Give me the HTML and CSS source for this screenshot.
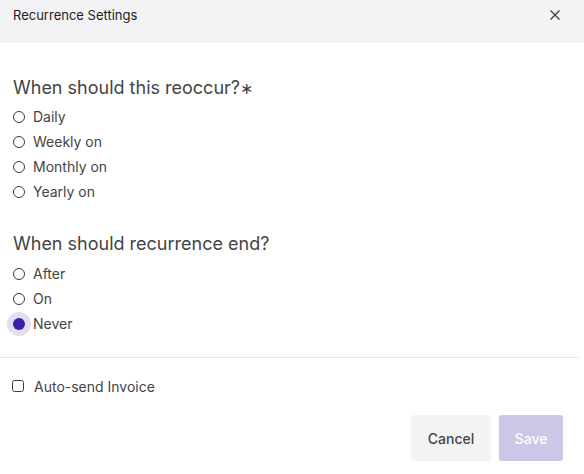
FILE: index.html
```html
<!DOCTYPE html>
<html>
<head>
<meta charset="utf-8">
<link rel="stylesheet" href="styles.css">
</head>
<body>
<div class="dialog">
  <header class="dlg-head">
    <span class="dlg-title">Recurrence Settings</span>
    <button class="close" aria-label="Close">
      <svg width="10" height="10" viewBox="0 0 10 10"><path d="M0.5 0.5 L9.5 9.5 M9.5 0.5 L0.5 9.5" stroke="#3a3a3a" stroke-width="1.3" fill="none"/></svg>
    </button>
  </header>
  <div class="form">
    <section class="group first">
      <h2 class="q">When should this reoccur?<span class="req">∗</span></h2>
      <label class="opt"><span class="radio"></span>Daily</label>
      <label class="opt"><span class="radio"></span>Weekly on</label>
      <label class="opt"><span class="radio"></span>Monthly on</label>
      <label class="opt"><span class="radio"></span>Yearly on</label>
    </section>
    <section class="group second">
      <h2 class="q">When should recurrence end?</h2>
      <label class="opt"><span class="radio"></span>After</label>
      <label class="opt"><span class="radio"></span>On</label>
      <label class="opt"><span class="radio checked"></span>Never</label>
    </section>
    <hr class="divider">
    <label class="check-row"><span class="checkbox"></span>Auto-send Invoice</label>
    <div class="actions">
      <button class="btn cancel">Cancel</button>
      <button class="btn save">Save</button>
    </div>
  </div>
</div>
</body>
</html>
```
FILE: styles.css
```css
* { box-sizing: border-box; }
html, body { margin: 0; padding: 0; background: #fff; }
body { font-family: Inter, "Noto Sans", sans-serif; color: #444; }

.dialog { width: 584px; }

.dlg-head {
  height: 43px;
  background: #f3f3f5;
  display: flex;
  justify-content: space-between;
  align-items: flex-start;
  padding: 7px 24px 0 13px;
}
.dlg-title { font-size: 13px; line-height: 16px; color: #222; }
.close {
  border: 0; background: none; padding: 0; margin-top: 3px;
  width: 10px; height: 10px; display: block;
}
.close svg { display: block; }

.form { width: 579px; }

.group { padding: 0 13px; display: flex; flex-direction: column; }
.group.first { padding-top: 33px; }
.group.second { padding-top: 28px; }

.q {
  margin: 0 0 5px;
  font-size: 18px;
  line-height: 24px;
  font-weight: 400;
  color: #444;
}
.group.first .q { margin-bottom: 4px; }
.req { font-size: 16px; }

.opt {
  display: flex;
  align-items: center;
  height: 25px;
  font-size: 14px;
  color: #444;
  gap: 8px;
}
.radio {
  width: 12px; height: 12px;
  border: 1.3px solid #3a3a3a;
  border-radius: 50%;
  flex: none;
}
.radio.checked {
  border: 0;
  background: #3b1fa8;
  box-shadow: 0 0 0 6px #e4def3;
}

.divider {
  margin: 21px 0 0;
  border: 0;
  border-top: 1px solid #e6e6e6;
}

.check-row {
  display: flex;
  align-items: center;
  gap: 10px;
  padding: 0 12px;
  margin-top: 20px;
  height: 16px;
  font-size: 14px;
  color: #444;
}
.checkbox {
  width: 12px; height: 12px;
  border: 1.2px solid #3a3a3a;
  border-radius: 2.5px;
  flex: none;
}

.actions {
  display: flex;
  justify-content: flex-end;
  gap: 8px;
  padding-right: 16px;
  margin-top: 21px;
}
.btn {
  height: 46px;
  border: 0;
  border-radius: 3px;
  font-family: Inter, "Noto Sans", sans-serif;
  font-size: 14px;
  font-weight: 500;
}
.cancel { width: 80px; background: #f3f3f3; color: #444; }
.save { width: 64px; background: #cdc6e6; color: #fff; }
```
